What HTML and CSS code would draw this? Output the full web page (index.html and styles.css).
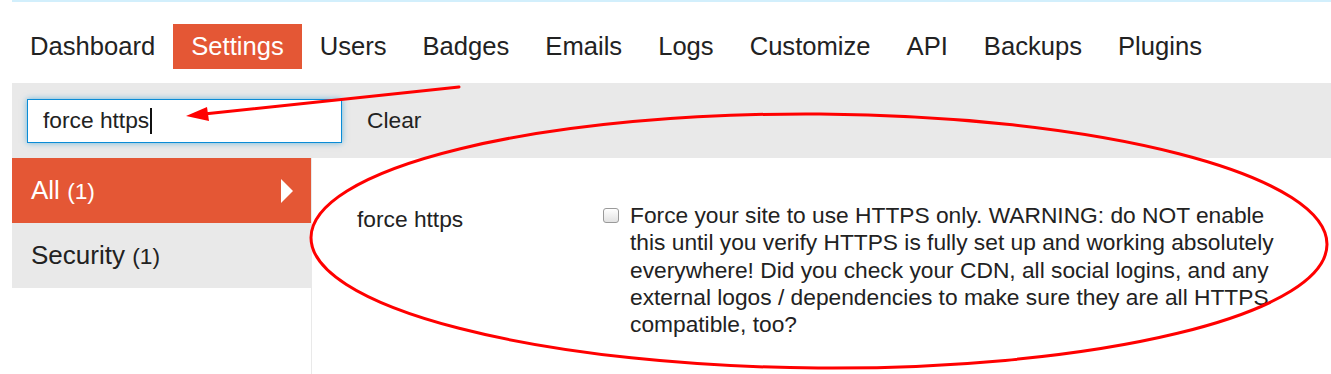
FILE: index.html
```html
<!DOCTYPE html>
<html lang="en">
<head>
  <meta charset="UTF-8">
  <title>Admin - Settings</title>
  <link rel="stylesheet" href="styles.css">
</head>
<body>
  <div class="top-line"></div>

  <div class="admin-container">
    <ul class="admin-nav">
      <li><a href="#">Dashboard</a></li>
      <li><a href="#" class="active">Settings</a></li>
      <li><a href="#">Users</a></li>
      <li><a href="#">Badges</a></li>
      <li><a href="#">Emails</a></li>
      <li><a href="#">Logs</a></li>
      <li><a href="#">Customize</a></li>
      <li><a href="#">API</a></li>
      <li><a href="#">Backups</a></li>
      <li><a href="#">Plugins</a></li>
    </ul>

    <div class="search-bar">
      <div class="search-input"><span>force https</span><span class="caret"></span></div>
      <button class="clear-btn">Clear</button>
    </div>

    <div class="admin-main">
      <ul class="sidebar">
        <li class="active"><a href="#">All <span class="count">(1)</span></a><span class="arrow"></span></li>
        <li><a href="#">Security <span class="count">(1)</span></a></li>
      </ul>

      <div class="settings">
        <div class="setting-row">
          <div class="setting-label">force https</div>
          <div class="setting-value">
            <input type="checkbox" class="check">
            <p>Force your site to use HTTPS only. WARNING: do NOT enable this until you verify HTTPS is fully set up and working absolutely everywhere! Did you check your CDN, all social logins, and any external logos / dependencies to make sure they are all HTTPS compatible, too?</p>
          </div>
        </div>
      </div>
    </div>
  </div>

  <!-- red annotations drawn over the screenshot -->
  <svg class="annotations" width="1331" height="374" viewBox="0 0 1331 374">
    <line x1="459" y1="87" x2="204" y2="114" stroke="#ff0000" stroke-width="3" stroke-linecap="round"/>
    <polygon points="186,116 207,107 209,121" fill="#ff0000"/>
    <ellipse cx="819" cy="241" rx="508" ry="127" fill="none" stroke="#ff0000" stroke-width="3" transform="rotate(0.4 819 241)"/>
  </svg>
</body>
</html>
```

FILE: styles.css
```css
/* Global Styles */
* {
  margin: 0;
  padding: 0;
  box-sizing: border-box;
}

body {
  font-family: 'Liberation Sans', Arial, sans-serif;
  color: #222;
  background: #fff;
  position: relative;
  height: 374px;
  overflow: hidden;
}

.top-line {
  height: 2px;
  margin-left: 12px;
  background-color: #d2effc;
}

.admin-container {
  padding-left: 12px;
}

/* Nav Tabs */
.admin-nav {
  list-style: none;
  display: flex;
  margin-top: 22px;
}

.admin-nav a {
  display: block;
  padding: 0 18px;
  height: 45px;
  line-height: 45px;
  font-size: 25.6px;
  color: #222;
  text-decoration: none;
}

.admin-nav a.active {
  background-color: #e45735;
  color: #fff;
}

/* Search Bar */
.search-bar {
  margin-top: 14px;
  height: 75px;
  background-color: #e9e9e9;
  padding: 15px;
  display: flex;
  align-items: center;
}

.search-input {
  width: 315px;
  height: 44px;
  background: #fff;
  border: 1px solid #0a8bd6;
  box-shadow: 0 0 6px rgba(0, 136, 204, 0.55);
  padding-left: 15px;
  display: flex;
  align-items: center;
  font-size: 22.75px;
}

.caret {
  display: inline-block;
  width: 2px;
  height: 26px;
  margin-left: 1px;
  background-color: #111;
}

.clear-btn {
  margin-left: 25px;
  border: none;
  background: none;
  font-family: inherit;
  font-size: 22.75px;
  color: #222;
}

/* Main Area */
.admin-main {
  display: flex;
}

.sidebar {
  list-style: none;
  width: 300px;
  min-height: 220px;
  border-right: 1px solid #e9e9e9;
}

.sidebar li {
  height: 65px;
  background-color: #e9e9e9;
  display: flex;
  align-items: center;
  justify-content: space-between;
  padding: 0 18px 0 19px;
}

.sidebar li a {
  font-size: 26px;
  color: #222;
  text-decoration: none;
}

.sidebar .count {
  font-size: 22.75px;
}

.sidebar li.active {
  background-color: #e45735;
}

.sidebar li.active a {
  color: #fff;
}

.arrow {
  width: 0;
  height: 0;
  border-top: 12px solid transparent;
  border-bottom: 12px solid transparent;
  border-left: 12px solid #fff;
}

.settings {
  flex: 1;
  padding: 44px 0 0 45px;
}

.setting-row {
  display: flex;
  font-size: 22.75px;
  line-height: 27.3px;
}

.setting-label {
  width: 246px;
  margin-top: 4px;
}

.setting-value {
  display: flex;
  align-items: flex-start;
}

.check {
  appearance: none;
  width: 16px;
  height: 15px;
  margin-top: 6px;
  margin-right: 11px;
  border: 1px solid #9a9a9a;
  border-radius: 3px;
  background: linear-gradient(#ffffff, #e2e2e2);
}

.setting-value p {
  width: 655px;
}

/* Annotation overlay */
.annotations {
  position: absolute;
  top: 0;
  left: 0;
  pointer-events: none;
}
```
